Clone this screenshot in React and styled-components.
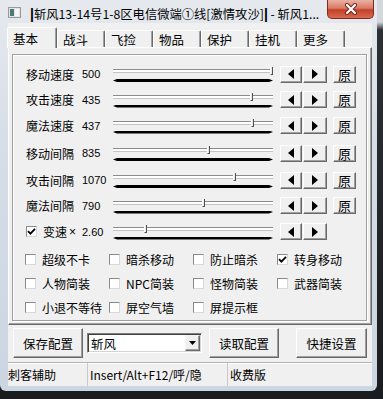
import React from 'react';
import styled, { createGlobalStyle } from 'styled-components';

const GlobalStyle = createGlobalStyle`
  html, body { margin: 0; padding: 0; }
  body {
    width: 383px;
    height: 399px;
    overflow: hidden;
    background: linear-gradient(180deg, #d4d8dc 0, #d4d8dc 22px, #2c3034 30px, #1a1c1f 100%);
    font-family: "Noto Sans CJK SC", "Liberation Sans", sans-serif;
    font-size: 12px;
    color: #000;
  }
`;

const Window = styled.div`
  width: 377px;
  height: 391px;
  box-sizing: border-box;
  padding: 0 5px 5px 8px;
  background: linear-gradient(180deg, #e6eaef 0%, #d6dee7 35%, #cbd6e2 100%);
  border-radius: 0 0 6px 6px;
  display: flex;
  flex-direction: column;
`;

const TitleBar = styled.div`
  height: 24px;
  display: flex;
  align-items: flex-start;
`;

const AppIcon = styled.svg`
  margin-top: 7px;
  flex: none;
`;

const Title = styled.div`
  margin-left: 9px;
  padding-top: 6px;
  line-height: 16px;
  font-size: 12.3px;
  white-space: nowrap;
  flex: 1;
  overflow: hidden;
`;

const Bar = styled.b`
  font-family: "Liberation Sans", sans-serif;
  font-weight: 900;
  font-size: 14px;
`;

const CloseBtn = styled.div`
  flex: none;
  width: 47px;
  height: 19px;
  margin-right: -2px;
  box-sizing: border-box;
  border: 1px solid #7d2c1f;
  border-top: none;
  border-radius: 0 0 5px 5px;
  background: linear-gradient(180deg, #e9b1a4 0%, #d87a63 45%, #c2422a 55%, #d9694e 100%);
  display: flex;
  align-items: center;
  justify-content: center;
`;

const Client = styled.div`
  flex: 1;
  background: #f0f0f0;
  display: flex;
  flex-direction: column;
`;

const TabStrip = styled.div`
  height: 24px;
  display: flex;
  align-items: flex-end;
  margin-left: -1px;
`;

const Tab = styled.div`
  box-sizing: border-box;
  width: ${p => (p.$active ? 50 : 48)}px;
  height: ${p => (p.$active ? 21 : 17)}px;
  margin-bottom: ${p => (p.$active ? -1 : 0)}px;
  position: relative;
  z-index: ${p => (p.$active ? 1 : 0)};
  background: #f0f0f0;
  border-top: 1px solid #fff;
  border-left: 1px solid #fff;
  border-right: 1px solid #696969;
  box-shadow: inset -1px 0 #a0a0a0;
  border-radius: 2px 2px 0 0;
  padding-left: 5px;
  display: flex;
  align-items: center;
  font-size: 12.5px;
`;

const Panel = styled.div`
  height: 278px;
  box-sizing: border-box;
  border: 1px solid;
  border-color: #fff #696969 #696969 #fff;
  box-shadow: inset -1px -1px #a0a0a0;
  padding: 6px 4px 3px 3px;
  display: flex;
`;

const GroupBox = styled.div`
  flex: 1;
  border: 1px solid #a0a0a0;
  box-shadow: inset 1px 1px #fff, 1px 1px #fff;
  padding-top: 6px;
`;

const Row = styled.div`
  height: ${p => p.$h || 26}px;
  display: flex;
  align-items: center;
  padding-left: 13px;
`;

const Label = styled.div`
  width: 56px;
  flex: none;
  display: flex;
  align-items: center;
  white-space: nowrap;
`;

const Value = styled.div`
  width: 31px;
  flex: none;
  font-family: "Liberation Sans", sans-serif;
  font-size: 11px;
`;

const Slider = styled.div`
  position: relative;
  width: 160px;
  height: 16px;
  margin-right: 7px;
  flex: none;
`;

const Track = styled.div`
  margin-top: 3px;
  height: 2px;
  background: #fff;
  border-top: 1px solid #8c8c8c;
  border-bottom: 1px solid #c4c4c4;
`;

const Ticks = styled.div`
  margin-top: 6px;
  height: 3px;
  background: #000;
  clip-path: polygon(0 50%, 4px 0, calc(100% - 4px) 0, 100% 50%, calc(100% - 4px) 100%, 4px 100%);
`;

const Thumb = styled.div`
  position: absolute;
  top: 1px;
  width: 1px;
  height: 7px;
  background: #e8e8e8;
  border-left: 1px solid #fff;
  border-right: 1px solid #505050;
  border-bottom: 1px solid #505050;
`;

const RaisedBtn = styled.div`
  box-sizing: border-box;
  width: ${p => p.$w}px;
  height: ${p => p.$h || 17}px;
  margin-left: ${p => p.$ml || 0}px;
  flex: none;
  background: #f0f0f0;
  border: 1px solid;
  border-color: #fff #696969 #696969 #fff;
  box-shadow: inset -1px -1px #a0a0a0;
  display: flex;
  align-items: center;
  justify-content: center;
  font-size: ${p => p.$fs || 12}px;
`;

const CheckGrid = styled.div`
  margin-top: 2px;
  padding-left: 12px;
  display: grid;
  grid-template-columns: repeat(4, 84px);
  grid-auto-rows: 24px;
`;

const CheckItem = styled.div`
  display: flex;
  align-items: center;
  gap: 6px;
  white-space: nowrap;
`;

const Box = styled.div`
  box-sizing: border-box;
  width: 11px;
  height: 11px;
  flex: none;
  background: #fff;
  border: 1px solid;
  border-color: #8a8a8a #d8d8d8 #d8d8d8 #8a8a8a;
  display: flex;
  align-items: center;
  justify-content: center;
`;

const Times = styled.span`
  margin-left: 2px;
  font-family: "Liberation Sans", sans-serif;
  font-size: 12px;
`;

const BottomBar = styled.div`
  height: 30px;
  margin-top: 3px;
  padding-left: 5px;
  display: flex;
  align-items: center;
`;

const Combo = styled.div`
  box-sizing: border-box;
  width: 115px;
  height: 20px;
  margin-left: 4px;
  margin-right: 7px;
  background: #fff;
  border: 1px solid;
  border-color: #808080 #fff #fff #808080;
  box-shadow: inset 1px 1px #404040, inset -1px -1px #d4d4d4;
  display: flex;
  align-items: center;
  padding: 1px 1px 1px 3px;
  font-size: 12.5px;
`;

const ComboText = styled.div`
  flex: 1;
`;

const DropBtn = styled.div`
  box-sizing: border-box;
  width: 15px;
  height: 16px;
  background: #f0f0f0;
  border: 1px solid;
  border-color: #f4f4f4 #696969 #696969 #f4f4f4;
  box-shadow: inset -1px -1px #a0a0a0;
  display: flex;
  align-items: center;
  justify-content: center;
`;

const StatusBar = styled.div`
  height: 23px;
  margin-top: 4px;
  border-top: 1px solid #b4b4b4;
  box-shadow: inset 0 1px #fff;
  display: flex;
  align-items: stretch;
`;

const StatusCell = styled.div`
  width: ${p => (p.$w ? `${p.$w}px` : 'auto')};
  flex: ${p => (p.$w ? 'none' : 1)};
  box-sizing: border-box;
  padding-left: ${p => p.$pl || 0}px;
  border-right: ${p => (p.$last ? 'none' : '1px solid #c8c8c8')};
  display: flex;
  align-items: center;
  white-space: nowrap;
  font-size: 12px;
`;

function Arrow({ dir }) {
  return (
    <svg width="6" height="10" viewBox="0 0 6 10">
      {dir === 'left'
        ? <polygon points="6,0 6,10 0,5" fill="#000" />
        : <polygon points="0,0 0,10 6,5" fill="#000" />}
    </svg>
  );
}

function Check({ checked }) {
  return (
    <Box>
      {checked && (
        <svg width="9" height="9" viewBox="0 0 9 9">
          <path d="M1 4.2 L3.4 6.6 L8 1.8" stroke="#000" strokeWidth="1.8" fill="none" />
        </svg>
      )}
    </Box>
  );
}

function Trackbar({ pos }) {
  return (
    <Slider>
      <Track />
      <Ticks />
      <Thumb style={{ left: pos }} />
    </Slider>
  );
}

const sliders = [
  { label: '移动速度', value: '500', pos: 157, h: 26 },
  { label: '攻击速度', value: '435', pos: 137, h: 25 },
  { label: '魔法速度', value: '437', pos: 138, h: 27 },
  { label: '移动间隔', value: '835', pos: 94, h: 28 },
  { label: '攻击间隔', value: '1070', pos: 120, h: 26 },
  { label: '魔法间隔', value: '790', pos: 89, h: 25 },
];

const checks = [
  ['超级不卡', false], ['暗杀移动', false], ['防止暗杀', false], ['转身移动', true],
  ['人物简装', false], ['NPC简装', false], ['怪物简装', false], ['武器简装', false],
  ['小退不等待', false], ['屏空气墙', false], ['屏提示框', false],
];

const tabs = ['基本', '战斗', '飞捡', '物品', '保护', '挂机', '更多'];

export default function App() {
  return (
    <>
      <GlobalStyle />
      <Window>
        <TitleBar>
          <AppIcon width="13" height="11" viewBox="0 0 13 11">
            <rect x="0.5" y="0.5" width="12" height="10" fill="#e4e4e4" stroke="#9a9a9a" />
            <rect x="2" y="2" width="4" height="7" fill="#4c7a78" />
            <rect x="7" y="2" width="4" height="7" fill="#f6f6f6" />
          </AppIcon>
          <Title>
            <Bar>|</Bar>斩风13-14号1-8区电信微端①线[激情攻沙]<Bar>|</Bar> - 斩风1...
          </Title>
          <CloseBtn>
            <svg width="14" height="12" viewBox="0 0 14 12">
              <path d="M3 2 L11 10 M11 2 L3 10" stroke="#6a2418" strokeWidth="4" strokeLinecap="round" />
              <path d="M3 2 L11 10 M11 2 L3 10" stroke="#fff" strokeWidth="2.2" strokeLinecap="round" />
            </svg>
          </CloseBtn>
        </TitleBar>
        <Client>
          <TabStrip>
            {tabs.map((t, i) => (
              <Tab key={t} $active={i === 0}>{t}</Tab>
            ))}
          </TabStrip>
          <Panel>
            <GroupBox>
              {sliders.map(s => (
                <Row key={s.label} $h={s.h}>
                  <Label>{s.label}</Label>
                  <Value>{s.value}</Value>
                  <Trackbar pos={s.pos} />
                  <RaisedBtn $w={22}><Arrow dir="left" /></RaisedBtn>
                  <RaisedBtn $w={24} $ml={1}><Arrow dir="right" /></RaisedBtn>
                  <RaisedBtn $w={23} $ml={6} $fs={13}>原</RaisedBtn>
                </Row>
              ))}
              <Row $h={27}>
                <Label>
                  <Check checked />
                  <span style={{ marginLeft: 6 }}>变速</span>
                  <Times>×</Times>
                </Label>
                <Value>2.60</Value>
                <Trackbar pos={31} />
                <RaisedBtn $w={22}><Arrow dir="left" /></RaisedBtn>
                <RaisedBtn $w={24} $ml={1}><Arrow dir="right" /></RaisedBtn>
              </Row>
              <CheckGrid>
                {checks.map(([name, on]) => (
                  <CheckItem key={name}>
                    <Check checked={on} />
                    <span>{name}</span>
                  </CheckItem>
                ))}
              </CheckGrid>
            </GroupBox>
          </Panel>
          <BottomBar>
            <RaisedBtn $w={70} $h={30} $fs={12.5}>保存配置</RaisedBtn>
            <Combo>
              <ComboText>斩风</ComboText>
              <DropBtn>
                <svg width="7" height="4" viewBox="0 0 7 4">
                  <polygon points="0,0 7,0 3.5,4" fill="#000" />
                </svg>
              </DropBtn>
            </Combo>
            <RaisedBtn $w={70} $h={30} $fs={12.5}>读取配置</RaisedBtn>
            <RaisedBtn $w={71} $h={30} $ml={17} $fs={12.5}>快捷设置</RaisedBtn>
          </BottomBar>
          <StatusBar>
            <StatusCell $w={80}>刺客辅助</StatusCell>
            <StatusCell $w={140} $pl={2}>Insert/Alt+F12/呼/隐</StatusCell>
            <StatusCell $pl={2} $last>收费版</StatusCell>
          </StatusBar>
        </Client>
      </Window>
    </>
  );
}
